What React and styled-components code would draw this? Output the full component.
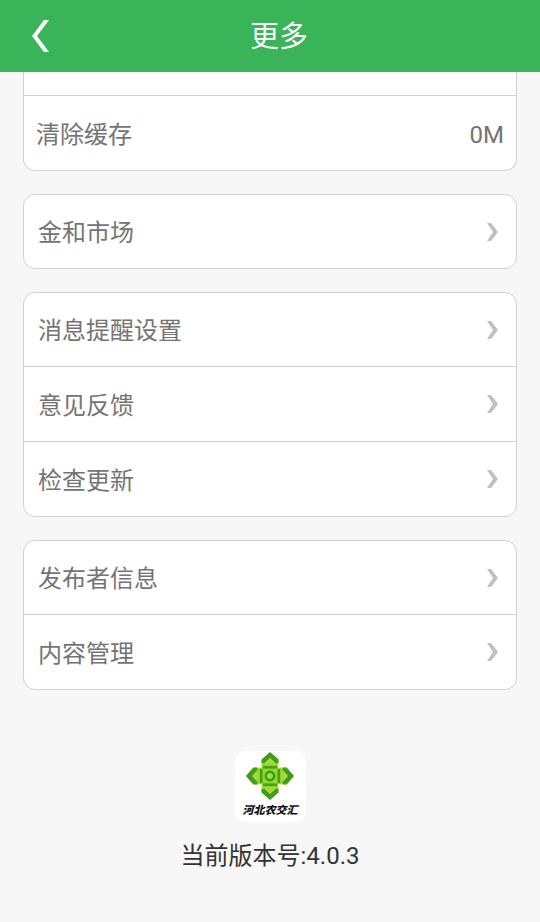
import styled, { createGlobalStyle } from "styled-components";

const GlobalStyle = createGlobalStyle`
    * {
        box-sizing: border-box;
    }
    body {
        margin: 0;
        background-color: #f7f7f7;
        color: #747474;
        font-family: Roboto, "Noto Sans CJK SC", sans-serif;
    }
`;

const Page = styled.div`
    display: flex;
    flex-direction: column;
    min-height: 100vh;
`;

const Header = styled.header`
    display: grid;
    grid-template-columns: 80px 1fr 62px;
    align-items: center;
    height: 72px;
    background-color: #3ab459;
`;

const BackButton = styled.button`
    display: flex;
    align-items: center;
    height: 72px;
    padding: 0 0 0 32px;
    border: 0;
    background: none;
    cursor: pointer;
`;

const Title = styled.h1`
    margin: 0;
    padding-top: 2px;
    color: white;
    font-size: 29px;
    font-weight: 400;
    line-height: 40px;
    text-align: center;
`;

const Settings = styled.main`
    display: flex;
    flex-direction: column;
    gap: 23px;
    padding: 0 23px;
`;

const Card = styled.section`
    overflow: hidden;
    border: 1px solid #d2d2d2;
    border-top-width: ${props => (props.$cut ? 0 : 1)}px;
    border-radius: ${props => (props.$cut ? '0 0 12px 12px' : '12px')};
    background-color: white;
`;

const Row = styled.button`
    display: flex;
    align-items: center;
    justify-content: space-between;
    width: 100%;
    height: ${props => (props.$cut ? 23 : 73)}px;
    padding: ${props => (props.$plain ? '0 12px' : '0 18px 0 14px')};
    border: 0;
    background: none;
    color: inherit;
    font-family: inherit;
    font-size: 24px;
    line-height: 36px;
    text-align: left;
    cursor: pointer;
    & + & {
        height: 75px;
        border-top: 1px solid #d2d2d2;
    }
`;

const Label = styled.span`
    padding-top: 3px;
`;

const About = styled.footer`
    display: flex;
    flex-direction: column;
    align-items: center;
    gap: 16px;
    padding: 61px 23px 47px;
`;

const LogoTile = styled.div`
    width: 71px;
    height: 71px;
    border-radius: 10px;
    background-color: white;
`;

const Version = styled.p`
    margin: 0;
    color: #333;
    font-size: 24px;
    line-height: 36px;
`;

const BackIcon = () => (
    <svg width="18" height="32" viewBox="0 0 18 32" aria-hidden="true">
        <path d="M12 0h5L5 16l12 16h-5L0 16z" fill="white" />
    </svg>
);

const Chevron = () => (
    <svg width="11" height="18" viewBox="0 0 11 18" aria-hidden="true">
        <path d="M0 0h4l7 9-7 9H0l6-9z" fill="#c0c0c0" />
    </svg>
);

const Arm = ({ angle }) => (
    <g transform={`rotate(${angle} 35 25)`}>
        <path d="M35 1l8.5 7.5v3.5l-2.5 .5-6-5.5-6 5.5-2.5-.5V8.5z" />
        <path d="M28 14.8h14v2.8H28z" />
    </g>
);

const Logo = () => (
    <svg width="71" height="71" viewBox="0 0 71 71" role="img" aria-label="河北农交汇">
        <defs>
            <linearGradient id="leaf" gradientUnits="userSpaceOnUse" x1="35" y1="1" x2="35" y2="49">
                <stop offset="0" stopColor="#3f9a1c" />
                <stop offset="0.5" stopColor="#3cab1e" />
                <stop offset="1" stopColor="#16a01f" />
            </linearGradient>
            <radialGradient id="glow" gradientUnits="userSpaceOnUse" cx="35" cy="25" r="22">
                <stop offset="0" stopColor="#8fd02c" />
                <stop offset="0.6" stopColor="#a4d830" />
                <stop offset="1" stopColor="#c4e64a" />
            </radialGradient>
        </defs>
        <path
            d="M35 2l8.5 7v7.5H52l7 8.5-7 8.5h-8.5V41L35 48l-8.5-7v-7.5H18L11 25l7-8.5h8.5V9z"
            fill="url(#glow)"
            stroke="#eef3a0"
            strokeWidth="0.8"
        />
        <g fill="url(#leaf)">
            {[0, 90, 180, 270].map(angle => <Arm key={angle} angle={angle} />)}
        </g>
        <circle cx="35" cy="25" r="4.2" fill="#a6da38" stroke="#2c9f1e" strokeWidth="2.4" />
        <text
            x="35"
            y="63"
            textAnchor="middle"
            fontSize="11"
            fontWeight="900"
            fontStyle="italic"
            fill="#111"
        >
            河北农交汇
        </text>
    </svg>
);

const groups = [
    ['金和市场'],
    ['消息提醒设置', '意见反馈', '检查更新'],
    ['发布者信息', '内容管理'],
];

const App = () => (
    <Page>
        <GlobalStyle />
        <Header>
            <BackButton aria-label="返回">
                <BackIcon />
            </BackButton>
            <Title>更多</Title>
        </Header>
        <Settings>
            <Card $cut>
                <Row as="div" $cut />
                <Row $plain>
                    <Label>清除缓存</Label>
                    <Label>0M</Label>
                </Row>
            </Card>
            {groups.map(labels => (
                <Card key={labels[0]}>
                    {labels.map(label => (
                        <Row key={label}>
                            <Label>{label}</Label>
                            <Chevron />
                        </Row>
                    ))}
                </Card>
            ))}
        </Settings>
        <About>
            <LogoTile>
                <Logo />
            </LogoTile>
            <Version>当前版本号:4.0.3</Version>
        </About>
    </Page>
);

export default App;
